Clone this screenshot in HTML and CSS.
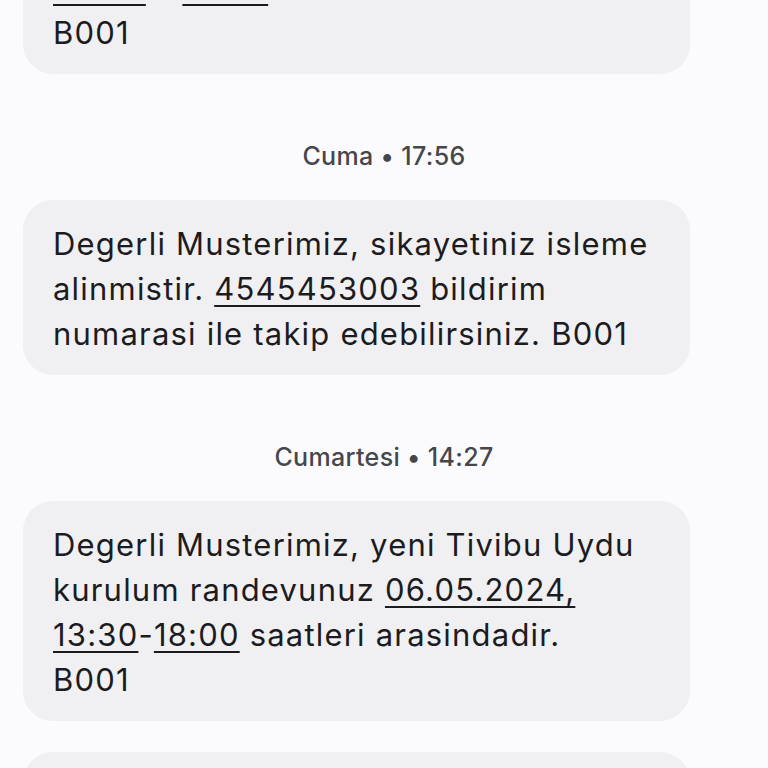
FILE: index.html
```html
<!DOCTYPE html>
<html lang="tr">
<head>
<meta charset="utf-8">
<title>Mesajlar</title>
<link rel="stylesheet" href="styles.css">
</head>
<body>
<main class="thread">
  <div class="bubble bubble-first">
    Degerli Musterimiz, yeni Tivibu Uydu<br>
    kurulum randevunuz <span class="link">06.05.2024,</span><br>
    <span class="link">09:00</span> – <span class="link">13:00</span> saatleri arasindadir.<br>
    B001
  </div>

  <div class="stamp">Cuma • 17:56</div>

  <div class="bubble">
    Degerli Musterimiz, sikayetiniz isleme<br>
    alinmistir. <span class="link">4545453003</span> bildirim<br>
    numarasi ile takip edebilirsiniz. B001
  </div>

  <div class="stamp">Cumartesi • 14:27</div>

  <div class="bubble">
    Degerli Musterimiz, yeni Tivibu Uydu<br>
    kurulum randevunuz <span class="link">06.05.2024,</span><br>
    <span class="link">13:30</span>-<span class="link">18:00</span> saatleri arasindadir.<br>
    B001
  </div>

  <div class="bubble bubble-next">
    Degerli Musterimiz, Tivibu Uydu kurulum<br>
    randevunuz onaylanmistir. B001
  </div>
</main>
</body>
</html>
```

FILE: styles.css
```css
html, body {
  margin: 0;
  padding: 0;
  background: #fbfbfe;
  overflow: hidden;
}

body {
  font-family: Inter, Roboto, "Noto Sans", "Liberation Sans", sans-serif;
  -webkit-font-smoothing: antialiased;
}

.thread {
  display: flex;
  flex-direction: column;
  align-items: flex-start;
  height: 768px;
  overflow: hidden;
}

.bubble {
  box-sizing: border-box;
  width: 667px;
  margin-left: 23px;
  padding: 21px 30px 19px;
  background: #f0f0f3;
  border-radius: 30px;
  color: #1c1c1f;
  font-size: 31px;
  line-height: 45px;
  letter-spacing: 1.2px;
  flex-shrink: 0;
}

.bubble-first {
  margin-top: -146px;
}

.bubble-next {
  margin-top: 31px;
}

.link {
  text-decoration: underline;
  text-decoration-thickness: 2px;
  text-underline-offset: 5px;
}

.stamp {
  align-self: stretch;
  margin: 67px 0 29px;
  text-align: center;
  color: #45474b;
  font-size: 25px;
  line-height: 30px;
  font-weight: 500;
  letter-spacing: 0.35px;
}
```
